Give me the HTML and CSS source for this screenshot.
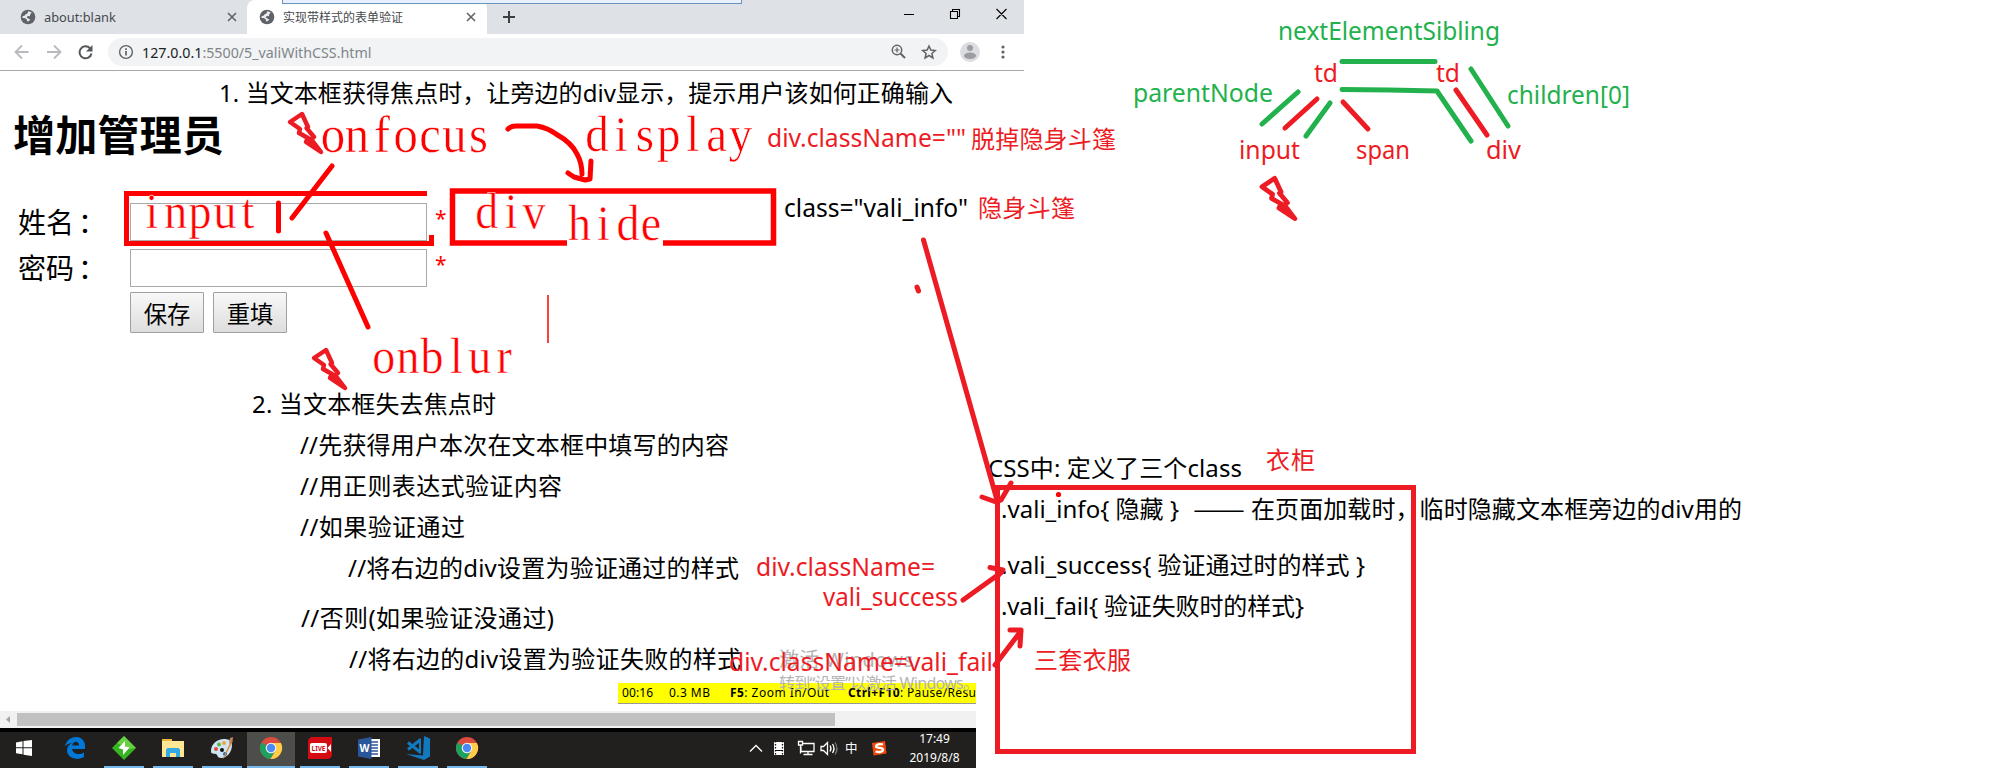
FILE: index.html
```html
<!DOCTYPE html>
<html lang="zh-CN">
<head>
<meta charset="utf-8">
<title>实现带样式的表单验证</title>
<link rel="stylesheet" href="styles.css">
</head>
<body>
<svg class="defs" width="0" height="0">
  <symbol id="globe" viewBox="0 0 16 16"><circle cx="8" cy="8" r="7.3" fill="#5f6368"/><path d="M2.5 9c2 .2 3.200.2 4 1.200s.4 1.800 1.300 2.400c1-.3 2.200-1.300 2.200-2.300-1-.2-1.500-.800-2.500-1.300-.9-.5-1-1.300.2-1.800 1-.3 1.400.2 2.100-.3.800-.6 0-1.200.600-1.900.5-.5 1.100-.7 1.500-1.200A6.300 6.300 0 0 0 8 2.200c-.3 1 .2 1.600-.7 2.300-1 .8-2.300.7-2.500 1.800-.1.700-1 .8-2.300 1z" fill="#e9ebee"/></symbol>
  <symbol id="cross" viewBox="0 0 10 10"><path d="M1 1l8 8M9 1l-8 8" stroke="#5f6368" stroke-width="1.600"/></symbol>
  <symbol id="chrome" viewBox="0 0 24 24"><circle cx="12" cy="12" r="11" fill="#dd4b3e"/><path d="M12 12L2.500 6.500A11 11 0 0 0 11.500 23l5-8.500z" fill="#1da15f"/><path d="M12 7h9.900A11 11 0 0 1 11.500 23l5-8.500z" fill="#ffcd46"/><circle cx="12" cy="12" r="5.300" fill="#f4f4f4"/><circle cx="12" cy="12" r="4.200" fill="#4a8af4"/></symbol>
  <symbol id="bolt" viewBox="-4 -12 44 50"><path d="M1 1L13-7L19 6L17.500 7L25 16L22 18L32 31L17 21L19 17L10 12L11 8Z" fill="none" stroke="#ed1c24" stroke-width="4.500" stroke-linejoin="round"/><path d="M19 17L23 19L32 31L17 21Z" fill="#ed1c24"/></symbol>
</svg>

<div class="screen">
  <div class="browser">
    <div class="tabs">
      <div class="tab"><svg class="fav"><use href="#globe"/></svg><span class="tab-en">about:blank</span><svg class="x"><use href="#cross"/></svg></div>
      <div class="tab active"><svg class="fav"><use href="#globe"/></svg><span>实现带样式的表单验证</span><svg class="x"><use href="#cross"/></svg></div>
      <svg class="plus" viewBox="0 0 12 12"><path d="M6 0v12M0 6h12" stroke="#3c4043" stroke-width="2"/></svg>
      <svg class="winbtns" viewBox="0 0 104 12"><path d="M0 6.500h10M46.500 3.500h7v7h-7zM48.500 3.500v-2h7v7h-2M92.500 1l10 10M102.500 1l-10 10" fill="none" stroke="#000" stroke-width="1.100"/></svg>
      <div class="popup"></div>
    </div>
    <div class="toolbar">
      <svg class="nav" viewBox="0 0 80 16"><path d="M14.500 8H2M8 1.500L1.500 8L8 14.500M33 8h13M40 1.500L46.500 8L40 14.500" fill="none" stroke="#b8babd" stroke-width="1.800"/><path d="M76 4.200A6 6 0 1 0 77.500 9.500" fill="none" stroke="#55585c" stroke-width="2"/><path d="M78.500 1v6.500h-6.500z" fill="#55585c"/></svg>
      <div class="omni">
        <svg class="info" viewBox="0 0 16 16"><circle cx="8" cy="8" r="6.400" fill="none" stroke="#5f6368" stroke-width="1.400"/><path d="M8 7v4.500M8 4.300v1.600" stroke="#5f6368" stroke-width="1.700"/></svg>
        <span class="url"><b>127.0.0.1</b>:5500/5_valiWithCSS.html</span>
        <svg class="omni-icons" viewBox="0 0 46 16"><g fill="none" stroke="#5f6368" stroke-width="1.500"><circle cx="6" cy="6" r="4.700"/><path d="M9.500 9.500L14 14" stroke-width="2"/><path d="M3.500 6h5M6 3.500v5" stroke-width="1.200"/><path d="M38 2l1.800 4.100 4.500.4-3.400 3 1 4.400-3.900-2.400-3.900 2.400 1-4.400-3.400-3 4.500-.4z"/></g></svg>
      </div>
      <svg class="avatar" viewBox="0 0 20 20"><circle cx="10" cy="10" r="10" fill="#dcdde0"/><circle cx="10" cy="6" r="3" fill="#9b9da0"/><ellipse cx="10" cy="13.800" rx="6" ry="3.200" fill="#9b9da0"/></svg>
      <svg class="dots" viewBox="0 0 4 14"><g fill="#5f6368"><circle cx="2" cy="2" r="1.600"/><circle cx="2" cy="7" r="1.600"/><circle cx="2" cy="12" r="1.600"/></g></svg>
    </div>
  </div>

  <div class="page">
    <h1>增加管理员</h1>
    <div class="form">
      <span class="label">姓名<i>：</i></span><div class="field"></div><span class="star">*</span>
      <span class="label">密码<i>：</i></span><div class="field"></div><span class="star">*</span>
    </div>
    <div class="buttons"><button>保存</button><button>重填</button></div>
  </div>

  <div class="recorder">
    <svg width="358" height="20"><g font-size="12"><text x="4" y="14" textLength="31">00:16</text><text x="51" y="14" textLength="41">0.3 MB</text><text x="112" y="14" textLength="99"><tspan font-weight="700">F5</tspan>: Zoom In/Out</text><text x="230" y="14" textLength="128"><tspan font-weight="700">Ctrl+F10</tspan>: Pause/Resu</text></g></svg>
  </div>
  <div class="scroll"><svg width="17" height="17"><path d="M10 5v7L6 8.500z" fill="#a3a3a3"/></svg><div class="thumb"></div></div>
  <div class="taskbar">
    <div class="task"><svg viewBox="0 0 24 24"><path d="M4 6.500L10.500 5.300v6H4zM11.500 5.100L20 4v7.300h-8.500zM4 12.300h6.500v6L4 17.300zM11.500 12.300H20V20l-8.500-1.300z" fill="#fff"/></svg></div>
    <div class="task"><svg viewBox="0 0 24 24"><path d="M2 10.500C3.500 4.500 7.500 1 13 1c6 0 9.500 4.500 9 10v2H9.200c.3 3.500 3.100 5 6.300 5 2 0 3.900-.6 5.500-1.600v4.700c-2 1.200-4.500 1.800-7 1.800C8 22.900 4 19 4 14.600 4 11 6 8.500 9 7 5.500 7.300 3.300 9 2 10.500zM9.300 9.500H16C16 7 14.500 5.700 12.800 5.700S9.600 7 9.300 9.500z" fill="#0078d7"/></svg></div>
    <div class="task run"><svg viewBox="0 0 24 24"><path d="M12 0l12 12-12 12L0 12z" fill="#35b51f"/><path d="M12 0l12 12-7 1L5 7z" fill="#8ce25e" opacity=".6"/><path d="M13 5L6.500 12l4.500 1.500V19l6.500-7.500-4.500-1z" fill="#fff"/></svg></div>
    <div class="task run"><svg viewBox="0 0 24 24"><path d="M1 3h10v2h12v16H1z" fill="#ffe694"/><path d="M1 3h10v2H1z" fill="#eeb63d"/><path d="M5 21v-7.500L6.500 12h11l1.500 1.500V21h-4v-4H9v4z" fill="#35a9e1"/></svg></div>
    <div class="task run"><svg viewBox="0 0 24 24"><path d="M1 15C1 8 7 3 14 3c5 0 8 2 8 6 0 7-5 13-11 13-4 0-3-3-5-4s-5 1-5-3z" fill="#cfe4f3"/><circle cx="6" cy="13" r="2" fill="#dc493e"/><circle cx="9" cy="8.500" r="2" fill="#5ab543"/><circle cx="14" cy="7" r="2" fill="#f0a43a"/><circle cx="15" cy="18" r="2" fill="#2765b3"/><circle cx="12" cy="14" r="2" fill="#111"/><path d="M12.500 23L20 7l1.500 1L14 22z" fill="#e48e35"/><path d="M19 7l1-5 3-1-.5 5-1.500 2.500z" fill="#c08455"/></svg></div>
    <div class="task run on"><svg><use href="#chrome"/></svg></div>
    <div class="task run"><svg viewBox="0 0 24 24"><path d="M5 1h19v17c0 3-2 5-5 5H0V6c0-3 2-5 5-5z" fill="#d40b10"/><rect x="2" y="7" width="17" height="10" rx="2" fill="#fff"/><path d="M23 8v8l-3.500-4z" fill="#fff"/><text x="3.500" y="15" font-size="7.500" font-weight="700" fill="#d40b10" textLength="14" lengthAdjust="spacingAndGlyphs">LIVE</text></svg></div>
    <div class="task run"><svg viewBox="0 0 24 24"><path d="M13 3h10v18H13z" fill="#fff"/><path d="M13 6h8M13 9h8M13 12h8M13 15h8M13 18h8" stroke="#2b579a" stroke-width="1.300"/><path d="M1 3.500L14.500 1v22L1 20.500z" fill="#2b579a"/><text x="2.500" y="16" font-size="11" font-weight="700" fill="#fff" textLength="10" lengthAdjust="spacingAndGlyphs">W</text></svg></div>
    <div class="task run"><svg viewBox="0 0 24 24"><path d="M18 0l6 2.500v18L18 24 0 18l17 1.500z" fill="#1279bf"/><path d="M2 6.500L14 16M2 13.500L14 4" stroke="#1279bf" stroke-width="3"/><path d="M14 2.500v15" stroke="#1279bf" stroke-width="2"/></svg></div>
    <div class="task run"><svg><use href="#chrome"/></svg></div>
    <svg class="tray" viewBox="0 0 146 36"><g fill="none" stroke="#fff" stroke-width="1.300"><path d="M1 19.500L7 13.500L13 19.500"/><path d="M53 11.500h12v8H52v-5M59 19.500v3M54.500 22.500h9M49.500 9.500h4v3.500h-4zM51.500 13v8.500"/><path d="M72 14.500h2.500l4-4v12l-4-4H72zM81 13.500q2 3 0 6M83.500 12q3 4.500 0 9"/><path d="M86 10.500q4 6 0 12" stroke="#777"/></g><path d="M25 10h10v13H25z" fill="#fff"/><path d="M26.500 9v15M33.500 9v15" stroke="#111" stroke-width="1.300" stroke-dasharray="1.500 1.500"/><path d="M27 18.500h6" stroke="#111"/><text x="96" y="21" font-size="12.500" fill="#fff">中</text><path d="M123 11l13-2 1.500 12.500-13 2z" fill="#f04a0a"/><path d="M134 12.500c-3-1-7 0-7 2s7 .5 7 3-4 3-7.500 2" fill="none" stroke="#fff" stroke-width="2.300"/></svg>
    <div class="clock"><span>17:49</span><span>2019/8/8</span></div>
  </div>
</div>

<svg class="notes" viewBox="0 0 2014 768">
  <g class="marker">
    <path d="M427 193.500H126.500V243.500H431.500V235"/>
    <path d="M567 243H452.500V191H773.500V243H663" stroke-width="5.500"/>
    <path class="r" d="M278.500 203V231M332 166L292 218M326 233L368 327"/>
    <path d="M548 295V343" stroke-width="1.500"/>
    <path class="r" d="M508 129Q511 126 516 126H537Q548 128 556 134Q572 143 577 154Q582 163 582 174M568 173L574 177L585 180L590 179L591 161"/>
  </g>
  <g class="song">
    <text transform="scale(.92 1)" x="362 388 415 441 467.500 494 520" y="152.500" font-size="53">onfocus</text>
    <text transform="scale(.92 1)" x="649 675 701 727 753 779 805" y="151" font-size="51">display</text>
    <text transform="scale(.92 1)" x="165 191 217.500 244.500 269.500" y="228" font-size="50">input</text>
    <text transform="scale(.92 1)" x="529 555.500 580.500" y="228" font-size="50">div</text>
    <text transform="scale(.92 1)" x="630 656 682.500 707.500" y="240" font-size="50">hide</text>
    <text transform="scale(.92 1)" x="417 443.500 469.500 496 521.500 548" y="373" font-size="50">onblur</text>
  </g>
  <g class="note">
    <text x="219" y="102" textLength="734">1. 当文本框获得焦点时，让旁边的div显示，提示用户该如何正确输入</text>
    <text class="en" x="784" y="217" textLength="184" lengthAdjust="spacingAndGlyphs">class="vali_info"</text>
    <text x="252" y="413" textLength="244">2. 当文本框失去焦点时</text>
    <text x="300" y="454" textLength="429">//先获得用户本次在文本框中填写的内容</text>
    <text x="300" y="495" textLength="262">//用正则表达式验证内容</text>
    <text x="300" y="536" textLength="165">//如果验证通过</text>
    <text x="348" y="577" textLength="391">//将右边的div设置为验证通过的样式</text>
    <text x="301" y="627" textLength="253">//否则(如果验证没通过)</text>
    <text x="349" y="668" textLength="392">//将右边的div设置为验证失败的样式</text>
    <text x="988" y="477" textLength="254">CSS中: 定义了三个class</text>
    <text x="1001" y="518" textLength="178">.vali_info{ 隐藏 }</text>
    <text x="1193" y="518" textLength="52" lengthAdjust="spacingAndGlyphs" font-family="Noto Sans CJK SC">——</text>
    <text x="1251" y="518" textLength="491">在页面加载时，临时隐藏文本框旁边的div用的</text>
    <text x="1001" y="574" textLength="364">.vali_success{ 验证通过时的样式 }</text>
    <text x="1001" y="615" textLength="303">.vali_fail{ 验证失败时的样式}</text>
  </g>
  <g class="watermark">
    <text x="779" y="667" font-size="20" textLength="134">激活 Windows</text>
    <text x="779" y="689" font-size="16" textLength="200">转到“设置”以激活 Windows。</text>
  </g>
  <g class="note red">
    <text class="en" x="767" y="147" textLength="199" lengthAdjust="spacingAndGlyphs">div.className=""</text>
    <text x="971" y="148" textLength="145">脱掉隐身斗篷</text>
    <text x="978" y="217" textLength="97">隐身斗篷</text>
    <text x="1266" y="469" textLength="49">衣柜</text>
    <text x="1034" y="669" textLength="97">三套衣服</text>
    <g class="en">
      <text x="756" y="575.500" textLength="179" lengthAdjust="spacingAndGlyphs">div.className=</text>
      <text x="823" y="606" textLength="135" lengthAdjust="spacingAndGlyphs">vali_success</text>
      <text x="729" y="670.500" textLength="264" lengthAdjust="spacingAndGlyphs">div.className=vali_fail</text>
      <text x="1314" y="82" textLength="24" lengthAdjust="spacingAndGlyphs">td</text>
      <text x="1436" y="82" textLength="24" lengthAdjust="spacingAndGlyphs">td</text>
      <text x="1239" y="159" textLength="61" lengthAdjust="spacingAndGlyphs">input</text>
      <text x="1356" y="159" textLength="54" lengthAdjust="spacingAndGlyphs">span</text>
      <text x="1486" y="159" textLength="35" lengthAdjust="spacingAndGlyphs">div</text>
    </g>
  </g>
  <g class="note green en">
    <text x="1278" y="40" textLength="222" lengthAdjust="spacingAndGlyphs">nextElementSibling</text>
    <text x="1133" y="102" textLength="140" lengthAdjust="spacingAndGlyphs">parentNode</text>
    <text x="1507" y="104" textLength="123" lengthAdjust="spacingAndGlyphs">children[0]</text>
  </g>
  <g class="pen">
    <path d="M997.500 487.500H1413.500V751.500H997.500Z"/>
    <path class="r" d="M923.500 240L997 500M982 497L996 502L1001 500L1011 483M917 287L918.500 291"/>
    <path class="r" d="M963 600L1002 572M990 567.500L1003 570L996 578M995 665L1021 631M1010 630H1021L1020 646"/>
    <path class="r" d="M1317 99L1285 128M1343 102L1368 129M1456 90L1487 135"/>
  </g>
  <g class="pen leaf">
    <path class="r" d="M1342 61.500H1435M1342 89.500L1389 90L1437 91L1471 141M1298 92L1262 124M1330 103L1306 136M1471 69L1508 126"/>
  </g>
  <circle cx="1058.500" cy="494.500" r="2.600" fill="#f00"/>
  <use href="#bolt" x="285" y="109" width="44" height="50"/>
  <use href="#bolt" x="309" y="345" width="44" height="50"/>
  <use href="#bolt" x="1256" y="173" width="48" height="53"/>
</svg>
</body>
</html>
```
FILE: styles.css
```css
body { margin: 0; width: 2014px; height: 768px; overflow: hidden; position: relative; background: #fff; font-family: "Noto Sans", "Noto Sans CJK SC", sans-serif; color: #000; }
.defs { display: block; }
.screen { width: 1024px; height: 768px; display: flex; flex-direction: column; }
.browser { flex: none; }
.tabs { position: relative; display: flex; align-items: center; height: 34px; background: #dee1e6; }
.tab { box-sizing: border-box; display: flex; align-items: center; width: 247px; height: 34px; padding: 0 10px 0 20px; font-size: 12px; color: #45494d; white-space: nowrap; }
.tab span { flex: 1; margin-left: 8px; }
.tab-en { font-size: 12.8px; }
.tab.active { width: 240px; padding: 0 11px 0 12px; background: #fff; border-radius: 8px 8px 0 0; }
.fav { width: 16px; height: 16px; }
.x { width: 10px; height: 10px; }
.plus { width: 12px; height: 12px; margin-left: 16px; }
.winbtns { width: 104px; height: 12px; margin: -6px 16px 0 auto; }
.popup { position: absolute; left: 282px; top: 0; width: 458px; height: 3px; border: 1px solid #6b93c0; border-top: 0; background: #e8f1fb; }
.toolbar { display: flex; align-items: center; height: 36px; border-bottom: 1px solid #a9a9a9; background: #fff; }
.nav { width: 80px; height: 16px; margin: 0 14px; }
.omni { box-sizing: border-box; display: flex; align-items: center; width: 840px; height: 28px; padding: 0 11px 0 10px; border-radius: 14px; background: #f1f3f4; }
.info { width: 16px; height: 16px; margin-right: 8px; }
.url { font-size: 14.25px; color: #80868b; }
.url b { font-weight: 400; color: #202124; }
.omni-icons { width: 46px; height: 16px; margin-left: auto; }
.avatar { width: 20px; height: 20px; margin-left: 12px; }
.dots { width: 4px; height: 14px; margin-left: 21px; }
.page { flex: 1; min-height: 0; }
h1 { margin: 31px 0 0 13px; font: 700 42.2px/62px "Noto Sans CJK SC", sans-serif; }
.form { display: grid; grid-template-columns: 112px 297px 20px; row-gap: 8px; margin: 39px 0 0 18px; align-items: center; }
.label { font: 28px/36px "Noto Sans CJK SC", sans-serif; height: 38px; }
.label i { margin-left: 4px; font-style: normal; }
.field { box-sizing: border-box; width: 297px; height: 38px; border: 1px solid #a9a9a9; background: #fff; }
.star { height: 38px; margin-left: 8px; font-size: 21px; line-height: 30px; color: #f00; }
.buttons { display: flex; gap: 9px; margin: 5px 0 0 130px; }
button { box-sizing: border-box; width: 74px; height: 41px; padding: 0; border: 1px solid #a0a0a0; border-radius: 1px; background: linear-gradient(#f8f8f8, #ddd); font: 23.3px "Noto Sans CJK SC", sans-serif; }
.recorder { flex: none; height: 20px; width: 358px; margin: 0 0 7px 618px; background: #ff0; border-bottom: 1px solid #999; }
.scroll { flex: none; display: flex; align-items: center; width: 976px; height: 17px; background: #f1f1f1; }
.thumb { width: 818px; height: 13px; background: #c1c1c1; }
.taskbar { flex: none; box-sizing: border-box; display: flex; width: 976px; height: 40px; border-top: 4px solid #000; background: #21201e; }
.task { box-sizing: border-box; width: 48px; margin-right: 1px; height: 36px; display: flex; justify-content: center; padding-top: 4px; }
.task:first-child { width: 50px; padding-right: 2px; }
.task svg { width: 24px; height: 24px; }
.run { background: linear-gradient(#76b9ed, #76b9ed) bottom / 40px 2px no-repeat; }
.run.on { background: linear-gradient(#76b9ed, #76b9ed) bottom / 48px 2px no-repeat #4d4d49; }
.tray { width: 146px; height: 36px; margin-left: 257px; }
.clock { flex: 1; display: flex; flex-direction: column; align-items: center; justify-content: space-between; padding: 0 0 3px; margin-right: 2px; color: #fff; font-size: 12px; line-height: 14px; }
.notes { position: absolute; left: 0; top: 0; width: 2014px; height: 768px; }
.marker { fill: none; stroke: #f00; stroke-width: 5; }
.pen { fill: none; stroke: #ed1c24; stroke-width: 5; }
.leaf { stroke: #22b14c; }
.r { stroke-linecap: round; stroke-linejoin: round; }
.song { fill: #f00; stroke: #fff; stroke-width: .5; font-family: "Liberation Serif", serif; text-anchor: middle; }
.note { font-size: 24px; fill: #000; }
.en { font-size: 24.5px; }
.note.red { fill: #ed1c24; }
.note.green { fill: #22b14c; }
.watermark { fill: #b4b4b4; }
```
